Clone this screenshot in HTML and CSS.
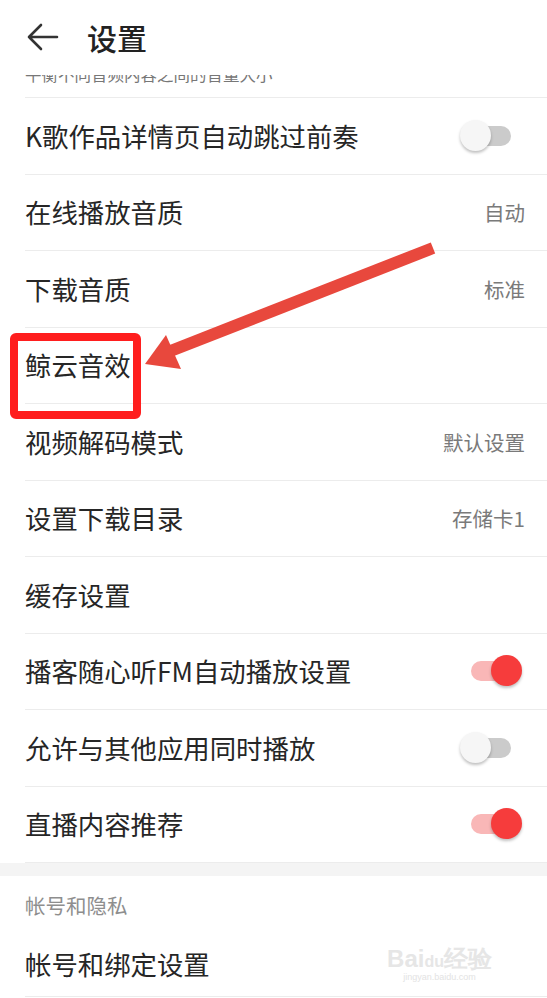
FILE: index.html
```html
<!DOCTYPE html>
<html lang="zh">
<head>
<meta charset="utf-8">
<link rel="stylesheet" href="styles.css">
</head>
<body>
<div class="page">
  <header class="topbar">
    <svg class="back" width="34" height="30" viewBox="0 0 34 30"><path d="M31 15 H3 M15 3 L3 15 L15 27" fill="none" stroke="#333" stroke-width="2.6" stroke-linecap="round" stroke-linejoin="round"/></svg>
    <h1 class="title">设置</h1>
  </header>
  <div class="list">
    <div class="partial"><span class="partial-text">平衡不同音频内容之间的音量大小</span></div>
    <div class="row"><span class="label">K歌作品详情页自动跳过前奏</span><span class="toggle"><span class="track"></span><span class="knob"></span></span></div>
    <div class="row"><span class="label">在线播放音质</span><span class="value">自动</span></div>
    <div class="row"><span class="label">下载音质</span><span class="value">标准</span></div>
    <div class="row"><span class="label">鲸云音效</span></div>
    <div class="row"><span class="label">视频解码模式</span><span class="value">默认设置</span></div>
    <div class="row"><span class="label">设置下载目录</span><span class="value">存储卡1</span></div>
    <div class="row"><span class="label">缓存设置</span></div>
    <div class="row"><span class="label">播客随心听FM自动播放设置</span><span class="toggle on"><span class="track"></span><span class="knob"></span></span></div>
    <div class="row"><span class="label">允许与其他应用同时播放</span><span class="toggle"><span class="track"></span><span class="knob"></span></span></div>
    <div class="row"><span class="label">直播内容推荐</span><span class="toggle on"><span class="track"></span><span class="knob"></span></span></div>
  </div>
  <div class="gap"></div>
  <div class="section-title">帐号和隐私</div>
  <div class="row last"><span class="label">帐号和绑定设置</span>
    <span class="watermark"><span class="wm-main">Bai<span class="wm-du">du</span>经验</span><span class="wm-sub">jingyan.baidu.com</span></span>
  </div>

  <div class="highlight"></div>
  <svg class="arrow" width="547" height="998" viewBox="0 0 547 998">
    <line x1="433" y1="248" x2="168" y2="352" stroke="#e8483d" stroke-width="12" stroke-linecap="butt"/>
    <polygon points="145,364 166,335 181,369" fill="#e8483d"/>
  </svg>
</div>
</body>
</html>
```
FILE: styles.css
```css
html, body {
  margin: 0;
  padding: 0;
  background: #fff;
}
body {
  font-family: "Noto Sans CJK SC", "Noto Sans", sans-serif;
  color: #262626;
}
.page {
  position: relative;
  width: 547px;
  height: 998px;
  overflow: hidden;
}
.topbar {
  height: 75px;
  display: flex;
  align-items: center;
  padding-left: 26px;
  padding-bottom: 2px;
  box-sizing: border-box;
  position: relative;
  z-index: 2;
  background: #fff;
}
.back {
  display: block;
}
.title {
  margin: 0 0 0 27px;
  font-size: 30px;
  font-weight: 500;
  color: #222;
  line-height: 1;
}
.list {
  margin-left: 25px;
}
.partial {
  display: flow-root;
  height: 22px;
  border-bottom: 1px solid #ececec;
}
.partial-text {
  display: block;
  margin-top: -9px;
  font-size: 16.5px;
  line-height: 17px;
  color: #777;
}
.row {
  height: 76.5px;
  box-sizing: border-box;
  border-bottom: 1px solid #ececec;
  display: flex;
  align-items: center;
  justify-content: space-between;
  padding-right: 22px;
}
.label {
  font-size: 26.4px;
  line-height: 1;
  color: #262626;
}
.value {
  font-size: 20.5px;
  color: #7a7a7a;
  line-height: 1;
}
.toggle {
  position: relative;
  width: 62px;
  height: 32px;
  margin-right: 3px;
}
.track {
  position: absolute;
  left: 11px;
  top: 6px;
  width: 40px;
  height: 20px;
  border-radius: 10px;
  background: #cbcbcb;
}
.knob {
  position: absolute;
  left: 0;
  top: 0;
  width: 31px;
  height: 31px;
  border-radius: 50%;
  background: #f6f6f6;
  box-shadow: 0 2px 3px rgba(0,0,0,0.25);
}
.toggle.on .track {
  background: #f9b7b7;
}
.toggle.on .knob {
  left: 31px;
  background: #f63c3c;
}
.gap {
  height: 13px;
  background: #f4f4f4;
}
.section-title {
  height: 57px;
  display: flex;
  align-items: center;
  padding-left: 25px;
  font-size: 20.5px;
  color: #8e8e8e;
}
.row.last {
  margin-left: 25px;
  height: 64px;
  padding-right: 55px;
}
.watermark {
  display: flex;
  flex-direction: column;
  align-items: center;
  color: #e3e3e3;
  font-family: "Liberation Sans", sans-serif;
  line-height: 1;
}
.wm-main {
  font-size: 24px;
  font-weight: bold;
  color: #e6e6e6;
}
.wm-du {
  font-size: 16px;
}
.wm-sub {
  font-size: 9px;
  margin-top: 2px;
}
.highlight {
  position: absolute;
  left: 10px;
  top: 333px;
  width: 131px;
  height: 86px;
  box-sizing: border-box;
  border: 8px solid #ff1e1e;
  border-radius: 6px;
}
.arrow {
  position: absolute;
  left: 0;
  top: 0;
  pointer-events: none;
}
```
